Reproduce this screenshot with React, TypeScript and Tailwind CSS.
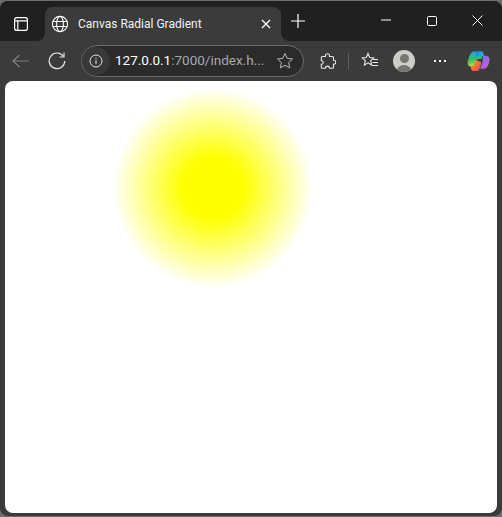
import React from "react";

const Stroke = ({ children, size = 20, vb = 20, cls = "" }: { children: React.ReactNode; size?: number; vb?: number; cls?: string }) => (
  <svg width={size} height={size} viewBox={`0 0 ${vb} ${vb}`} fill="none" stroke="currentColor" strokeWidth={1.1} className={cls}>
    {children}
  </svg>
);

function Copilot() {
  return (
    <svg width="23" height="23" viewBox="0 0 24 24">
      <defs>
        <linearGradient id="cpA" x1="0.3" y1="0" x2="0.5" y2="1">
          <stop offset="0" stopColor="#1aa5ea" />
          <stop offset="0.5" stopColor="#35c05e" />
          <stop offset="1" stopColor="#e2d635" />
        </linearGradient>
        <linearGradient id="cpB" x1="0.2" y1="0" x2="1" y2="1">
          <stop offset="0" stopColor="#6f78f2" />
          <stop offset="0.6" stopColor="#b45fe0" />
          <stop offset="1" stopColor="#e56ac4" />
        </linearGradient>
        <linearGradient id="cpC" x1="0" y1="0" x2="1" y2="1">
          <stop offset="0" stopColor="#f8b530" />
          <stop offset="0.6" stopColor="#f2603c" />
          <stop offset="1" stopColor="#e8457a" />
        </linearGradient>
        <linearGradient id="cpD" x1="0" y1="0" x2="1" y2="0.6">
          <stop offset="0" stopColor="#1670e0" />
          <stop offset="1" stopColor="#27c0e8" />
        </linearGradient>
      </defs>
      <path d="M7 1.500h8c1 0 1.600.6 1.900 1.400L15 9l-5 1-3 7.500H4.500C2 17.500.4 15.500.7 13 1 9.500 3.500 1.500 7 1.500z" fill="url(#cpA)" />
      <path d="M9 1.500h6c1.200 0 1.800.8 2 1.500l.8 3.500-5.300-.5c-2 0-2.800 1-3.300 2.500L8 9l1.500-4c.2-.8-.2-2.500-.5-3.500z" fill="url(#cpD)" />
      <path d="M16.500 6h3.300c2.200 0 3.700 1.800 3.700 3.800 0 3.200-1.800 9-5.300 9.700h-4.500l2.500-7z" fill="url(#cpB)" />
      <path d="M8.800 10.500l4.700 1.500c1 .4 1.500 1 1.300 2l-1.300 4.500c-.5 1.300-1.300 3.500-3.500 3.500H7c-1.500 0-2.300-1-2.700-2.500L4 17h3z" fill="url(#cpC)" />
    </svg>
  );
}

export default function App() {
  return (
    <div className="h-[517px] w-[502px] overflow-hidden bg-[#6a6f6c] pt-px pb-px font-['Roboto','Noto_Sans',sans-serif]">
      <div className="flex h-[515px] flex-col overflow-hidden rounded-t-lg rounded-b-lg bg-[#3b3b3b]">
        {/* title bar */}
        <div className="flex h-10 bg-[#3b3b3b] text-white">
          <div className="flex w-[45px] items-center rounded-br-lg bg-[#202020] pt-[5px] pl-[14px]">
            <svg width="14" height="14" viewBox="0 0 14 14" fill="none" stroke="currentColor" strokeWidth="1.200">
              <rect x=".6" y=".6" width="12.800" height="12.800" rx="2.200" />
              <path d="M.6 3.800h12.800M3.800 3.800v9.600" />
            </svg>
          </div>
          <div className="flex w-[236px] flex-col bg-[#202020]">
            <div className="mt-[6px] flex h-[34px] items-center rounded-t-lg bg-[#3b3b3b] pr-[10px] pl-[6px]">
              <Stroke size={18} vb={18}>
                <circle cx="9" cy="9" r="7.600" />
                <ellipse cx="9" cy="9" rx="3.400" ry="7.600" />
                <path d="M2 6.500h14M2 11.500h14" />
              </Stroke>
              <span className="ml-[9px] flex-1 text-[12px] leading-none whitespace-nowrap text-[#f2f2f2]">Canvas Radial Gradient</span>
              <svg width="10" height="10" viewBox="0 0 10 10" stroke="currentColor" strokeWidth="1.200">
                <path d="M1 1l8 8M9 1l-8 8" />
              </svg>
            </div>
          </div>
          <div className="flex flex-1 items-center rounded-bl-lg bg-[#202020]">
            <svg width="14" height="14" viewBox="0 0 14 14" stroke="currentColor" strokeWidth="1.200" className="ml-[10px]">
              <path d="M7 0v14M0 7h14" />
            </svg>
            <svg width="10" height="2" viewBox="0 0 10 2" stroke="currentColor" className="ml-[76px] mb-[3px]">
              <path d="M0 1h10" />
            </svg>
            <svg width="10" height="10" viewBox="0 0 10 10" fill="none" stroke="currentColor" className="ml-[36px] mb-[1px]">
              <rect x=".5" y=".5" width="9" height="9" rx="1" />
            </svg>
            <svg width="11" height="11" viewBox="0 0 11 11" stroke="currentColor" className="ml-[35px] mb-[1px]">
              <path d="M.5.500l10 10M10.500.500l-10 10" />
            </svg>
          </div>
        </div>

        {/* toolbar */}
        <div className="flex h-10 items-center text-[#e6e6e6]">
          <svg width="18" height="14" viewBox="0 0 18 14" fill="none" stroke="#7f7f7f" strokeWidth="1.200" className="ml-[12px]">
            <path d="M1 7h16M7.500 1L1 7l6.500 6" />
          </svg>
          <svg width="18" height="18" viewBox="0 0 18 18" fill="none" stroke="currentColor" strokeWidth="1.200" className="ml-[18px]">
            <path d="M15.500 4.500A7.800 7.800 0 1 0 16.800 9" />
            <path d="M16 .5v4.500h-4.500" />
          </svg>
          <div className="ml-[15px] flex h-8 w-[223px] items-center rounded-full border border-[#6b6b6b] bg-[#2b2b2b]">
            <div className="flex h-[28px] w-[28px] items-center justify-center rounded-full bg-[#383838]">
              <svg width="14" height="14" viewBox="0 0 14 14" fill="none" stroke="currentColor">
                <circle cx="7" cy="7" r="6" />
                <path d="M7 6v4.200M7 3.600v1.200" />
              </svg>
            </div>
            <span className="ml-[5px] text-[13.5px] leading-none whitespace-nowrap text-white">
              127.0.0.1<span className="text-[#a8a8a8]">:7000/index.h...</span>
            </span>
            <svg width="18" height="18" viewBox="0 0 18 18" fill="none" stroke="#b8b8b8" className="ml-auto mr-[9px]">
              <path d="M9 1.500l2.300 4.900 5.200.6-3.900 3.600 1.100 5.300L9 13.300l-4.700 2.600 1.100-5.300L1.500 7l5.200-.6z" />
            </svg>
          </div>
          <svg width="16" height="17" viewBox="0 0 16 17" fill="none" stroke="currentColor" strokeWidth="1.100" className="ml-[16px]">
            <path d="M5.500 3.500V2.800C5.500 1.500 6.500.8 7.500.8s2 .7 2 2v.7h3c.6 0 1 .4 1 1v2.800h.3c1.200 0 2 .9 2 2s-.8 2-2 2h-.3v3c0 .6-.4 1-1 1H9.500c0-1.400-.8-2.200-2-2.200s-2 .8-2 2.200H2.300c-.6 0-1-.4-1-1v-3c1.300 0 2-.8 2-1.800s-.7-1.800-2-1.800V4.500c0-.6.4-1 1-1z" />
          </svg>
          <div className="ml-[12px] h-[16px] w-px bg-[#5e5e5e]" />
          <svg width="18" height="18" viewBox="0 0 18 18" fill="none" stroke="currentColor" strokeWidth="1.100" className="ml-[12px]">
            <path d="M7 1.500l1.700 4 4 .4-3 2.800.9 4.300L7 10.800l-3.600 2.200.9-4.300-3-2.800 4-.4zM12 7.500h5M11.500 10.500h5.500M10.500 13.500h6.500" />
          </svg>
          <div className="relative ml-[14px] h-[22px] w-[22px] overflow-hidden rounded-full bg-[#cfcdc8]">
            <div className="mx-auto mt-[4px] h-[9px] w-[9px] rounded-full bg-[#777673]" />
            <div className="mx-auto mt-[2px] h-[12px] w-[16px] rounded-t-full bg-[#777673]" />
          </div>
          <div className="ml-[19px] flex gap-[3px]">
            <div className="h-[2px] w-[2px] bg-white" />
            <div className="h-[2px] w-[2px] bg-white" />
            <div className="h-[2px] w-[2px] bg-white" />
          </div>
          <div className="ml-[21px]"><Copilot /></div>
        </div>

        {/* page */}
        <div className="mx-[5px] h-[432px] rounded-lg bg-white pt-[7px] pl-[108px]">
          <div className="h-[200px] w-[200px] bg-[radial-gradient(circle_closest-side,#ffff00_0%,#ffff00_30%,#ffffff_100%)]" />
        </div>
      </div>
    </div>
  );
}
